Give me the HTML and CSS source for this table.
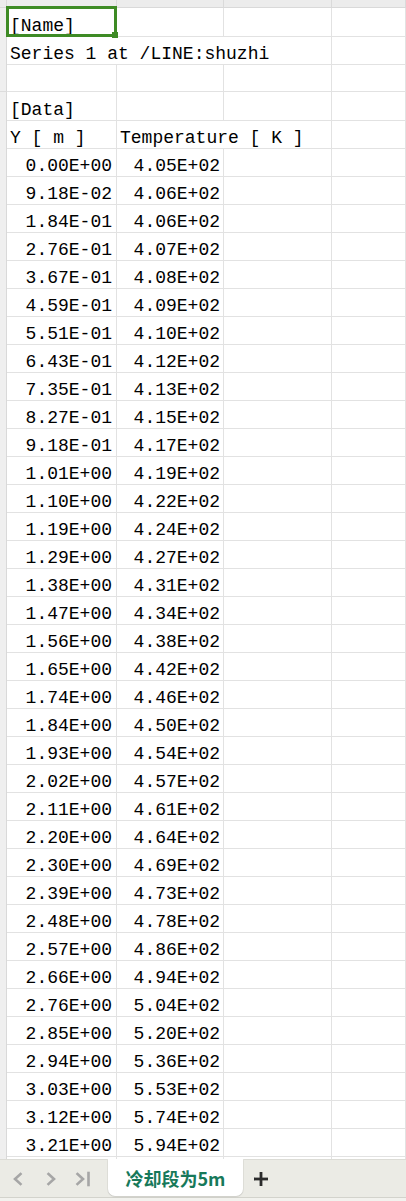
FILE: index.html
```html
<!DOCTYPE html>
<html>
<head>
<meta charset="utf-8">
<link rel="stylesheet" href="styles.css">
</head>
<body>
<div class="app">
  <div class="sheet">
    <div class="row head"><div class="rh"></div><div class="c"></div><div class="c"></div><div class="c"></div><div class="c"></div></div>
    <div class="row"><div class="rh"></div><div class="c t">[Name]</div><div class="c"></div><div class="c"></div><div class="c"></div></div>
    <div class="row"><div class="rh"></div><div class="c t span3">Series 1 at /LINE:shuzhi</div><div class="c"></div></div>
    <div class="row"><div class="rh"></div><div class="c"></div><div class="c"></div><div class="c"></div><div class="c"></div></div>
    <div class="row"><div class="rh"></div><div class="c t">[Data]</div><div class="c"></div><div class="c"></div><div class="c"></div></div>
    <div class="row"><div class="rh"></div><div class="c t">Y [ m ]</div><div class="c t span2">Temperature [ K ]</div><div class="c"></div></div>
    <div class="row"><div class="rh"></div><div class="c n">0.00E+00</div><div class="c n b">4.05E+02</div><div class="c"></div><div class="c"></div></div>
    <div class="row"><div class="rh"></div><div class="c n">9.18E-02</div><div class="c n b">4.06E+02</div><div class="c"></div><div class="c"></div></div>
    <div class="row"><div class="rh"></div><div class="c n">1.84E-01</div><div class="c n b">4.06E+02</div><div class="c"></div><div class="c"></div></div>
    <div class="row"><div class="rh"></div><div class="c n">2.76E-01</div><div class="c n b">4.07E+02</div><div class="c"></div><div class="c"></div></div>
    <div class="row"><div class="rh"></div><div class="c n">3.67E-01</div><div class="c n b">4.08E+02</div><div class="c"></div><div class="c"></div></div>
    <div class="row"><div class="rh"></div><div class="c n">4.59E-01</div><div class="c n b">4.09E+02</div><div class="c"></div><div class="c"></div></div>
    <div class="row"><div class="rh"></div><div class="c n">5.51E-01</div><div class="c n b">4.10E+02</div><div class="c"></div><div class="c"></div></div>
    <div class="row"><div class="rh"></div><div class="c n">6.43E-01</div><div class="c n b">4.12E+02</div><div class="c"></div><div class="c"></div></div>
    <div class="row"><div class="rh"></div><div class="c n">7.35E-01</div><div class="c n b">4.13E+02</div><div class="c"></div><div class="c"></div></div>
    <div class="row"><div class="rh"></div><div class="c n">8.27E-01</div><div class="c n b">4.15E+02</div><div class="c"></div><div class="c"></div></div>
    <div class="row"><div class="rh"></div><div class="c n">9.18E-01</div><div class="c n b">4.17E+02</div><div class="c"></div><div class="c"></div></div>
    <div class="row"><div class="rh"></div><div class="c n">1.01E+00</div><div class="c n b">4.19E+02</div><div class="c"></div><div class="c"></div></div>
    <div class="row"><div class="rh"></div><div class="c n">1.10E+00</div><div class="c n b">4.22E+02</div><div class="c"></div><div class="c"></div></div>
    <div class="row"><div class="rh"></div><div class="c n">1.19E+00</div><div class="c n b">4.24E+02</div><div class="c"></div><div class="c"></div></div>
    <div class="row"><div class="rh"></div><div class="c n">1.29E+00</div><div class="c n b">4.27E+02</div><div class="c"></div><div class="c"></div></div>
    <div class="row"><div class="rh"></div><div class="c n">1.38E+00</div><div class="c n b">4.31E+02</div><div class="c"></div><div class="c"></div></div>
    <div class="row"><div class="rh"></div><div class="c n">1.47E+00</div><div class="c n b">4.34E+02</div><div class="c"></div><div class="c"></div></div>
    <div class="row"><div class="rh"></div><div class="c n">1.56E+00</div><div class="c n b">4.38E+02</div><div class="c"></div><div class="c"></div></div>
    <div class="row"><div class="rh"></div><div class="c n">1.65E+00</div><div class="c n b">4.42E+02</div><div class="c"></div><div class="c"></div></div>
    <div class="row"><div class="rh"></div><div class="c n">1.74E+00</div><div class="c n b">4.46E+02</div><div class="c"></div><div class="c"></div></div>
    <div class="row"><div class="rh"></div><div class="c n">1.84E+00</div><div class="c n b">4.50E+02</div><div class="c"></div><div class="c"></div></div>
    <div class="row"><div class="rh"></div><div class="c n">1.93E+00</div><div class="c n b">4.54E+02</div><div class="c"></div><div class="c"></div></div>
    <div class="row"><div class="rh"></div><div class="c n">2.02E+00</div><div class="c n b">4.57E+02</div><div class="c"></div><div class="c"></div></div>
    <div class="row"><div class="rh"></div><div class="c n">2.11E+00</div><div class="c n b">4.61E+02</div><div class="c"></div><div class="c"></div></div>
    <div class="row"><div class="rh"></div><div class="c n">2.20E+00</div><div class="c n b">4.64E+02</div><div class="c"></div><div class="c"></div></div>
    <div class="row"><div class="rh"></div><div class="c n">2.30E+00</div><div class="c n b">4.69E+02</div><div class="c"></div><div class="c"></div></div>
    <div class="row"><div class="rh"></div><div class="c n">2.39E+00</div><div class="c n b">4.73E+02</div><div class="c"></div><div class="c"></div></div>
    <div class="row"><div class="rh"></div><div class="c n">2.48E+00</div><div class="c n b">4.78E+02</div><div class="c"></div><div class="c"></div></div>
    <div class="row"><div class="rh"></div><div class="c n">2.57E+00</div><div class="c n b">4.86E+02</div><div class="c"></div><div class="c"></div></div>
    <div class="row"><div class="rh"></div><div class="c n">2.66E+00</div><div class="c n b">4.94E+02</div><div class="c"></div><div class="c"></div></div>
    <div class="row"><div class="rh"></div><div class="c n">2.76E+00</div><div class="c n b">5.04E+02</div><div class="c"></div><div class="c"></div></div>
    <div class="row"><div class="rh"></div><div class="c n">2.85E+00</div><div class="c n b">5.20E+02</div><div class="c"></div><div class="c"></div></div>
    <div class="row"><div class="rh"></div><div class="c n">2.94E+00</div><div class="c n b">5.36E+02</div><div class="c"></div><div class="c"></div></div>
    <div class="row"><div class="rh"></div><div class="c n">3.03E+00</div><div class="c n b">5.53E+02</div><div class="c"></div><div class="c"></div></div>
    <div class="row"><div class="rh"></div><div class="c n">3.12E+00</div><div class="c n b">5.74E+02</div><div class="c"></div><div class="c"></div></div>
    <div class="row"><div class="rh"></div><div class="c n">3.21E+00</div><div class="c n b">5.94E+02</div><div class="c"></div><div class="c"></div></div>
    <div class="row"><div class="rh"></div><div class="c"></div><div class="c"></div><div class="c"></div><div class="c"></div></div>
    <div class="sel"><span class="handle"></span></div>
  </div>
  <div class="tabbar">
    <svg class="nav" width="100" height="39" viewBox="0 0 100 39">
      <polyline points="20.5,14 15,19 20.5,24" />
      <polyline points="48.5,14 54,19 48.5,24" />
      <polyline points="77.5,14 83,19 77.5,24" />
      <line x1="88.5" y1="13" x2="88.5" y2="25" />
    </svg>
    <div class="tab">冷却段为5m</div>
    <svg class="plus" width="16" height="16" viewBox="0 0 16 16">
      <line x1="1" y1="8" x2="15" y2="8" />
      <line x1="8" y1="1" x2="8" y2="15" />
    </svg>
  </div>
</div>
</body>
</html>
```

FILE: styles.css
```css
* { box-sizing: border-box; }
html, body { margin: 0; padding: 0; background: #ffffff; }
.app {
  width: 406px;
  height: 1201px;
  display: flex;
  flex-direction: column;
  overflow: hidden;
}
.sheet {
  position: relative;
  height: 1159px;
  flex: none;
  overflow: hidden;
  font-family: "Liberation Mono", monospace;
  font-size: 18px;
  color: #000;
}
.row {
  display: grid;
  grid-template-columns: 7px 110px 107px 108px 1fr;
  height: 28px;
}
.row .c, .row .rh {
  border-right: 1px solid #e2e2e2;
  border-bottom: 1px solid #e2e2e2;
  white-space: nowrap;
  overflow: visible;
  line-height: 20px;
  padding-top: 8px;
}
.row .rh {
  background: #efefef;
  border-right-color: #d9d9d9;
  border-bottom-color: #dcdcdc;
}
.row.head { height: 8px; }
.row.head .c, .row.head .rh {
  background: #ececec;
  border-bottom-color: #d9d9d9;
  border-right-color: #dadada;
  padding: 0;
}
.c.t { padding-left: 3px; }
.c.n { text-align: right; padding-right: 4px; }
.c.n.b { padding-right: 3px; }
.span3 { grid-column: span 3; }
.span2 { grid-column: span 2; }
.sel {
  position: absolute;
  left: 6px;
  top: 6px;
  width: 111px;
  height: 31px;
  border: 3px solid #3e8b25;
}
.sel .handle {
  position: absolute;
  right: -4px;
  bottom: -4px;
  width: 6px;
  height: 6px;
  background: #3e8b25;
}
.tabbar {
  flex: none;
  height: 42px;
  background: #ebebe5;
  border-top: 1px solid #dcdcd6;
  border-bottom: 3px solid #f2f2ee;
  box-shadow: inset 0 -1px 0 #d3d3cc;
  display: flex;
  align-items: flex-start;
  position: relative;
}
.nav { flex: none; margin-right: 8px; }
.nav polyline, .nav line {
  fill: none;
  stroke: #a6a6a6;
  stroke-width: 2.6;
  stroke-linecap: square;
}
.tab {
  flex: none;
  width: 135px;
  height: 37px;
  margin-top: -1px;
  background: #ffffff;
  border-radius: 0 0 7px 7px;
  box-shadow: 0 1px 1px rgba(0,0,0,0.12), 1px 0 0 #e0e0da, -1px 0 0 #e0e0da;
  display: flex;
  align-items: center;
  justify-content: center;
  font-family: "Noto Sans CJK SC", sans-serif;
  font-weight: bold;
  font-size: 18px;
  color: #17795a;
}
.plus { flex: none; margin: 11px 0 0 10px; }
.plus line { stroke: #2b2b2b; stroke-width: 2.8; }
```
